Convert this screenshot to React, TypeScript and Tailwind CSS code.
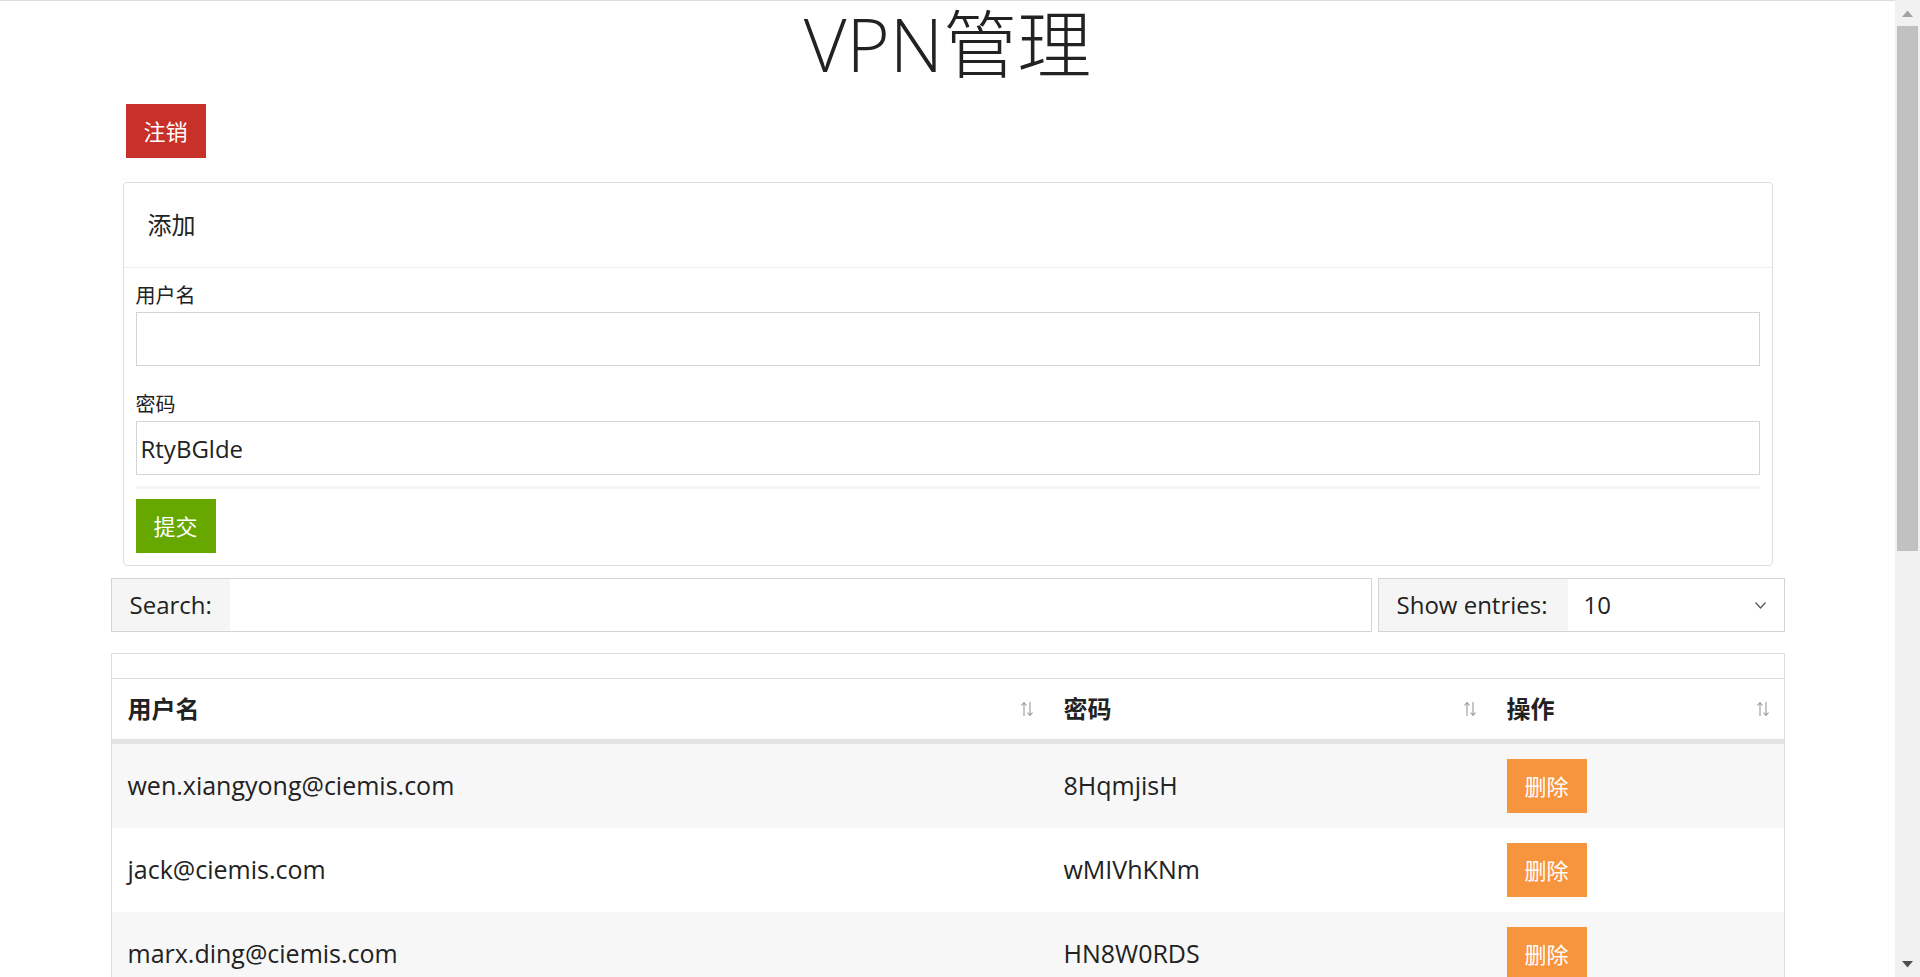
import React from "react";

const users = [
  { name: "wen.xiangyong@ciemis.com", pass: "8HqmjisH" },
  { name: "jack@ciemis.com", pass: "wMIVhKNm" },
  { name: "marx.ding@ciemis.com", pass: "HN8W0RDS" },
  { name: "li.wei@ciemis.com", pass: "Pq7tRzKa" },
  { name: "zhang.min@ciemis.com", pass: "Xv3LmQwe" },
  { name: "chen.hao@ciemis.com", pass: "Bn5YtUio" },
  { name: "wang.lei@ciemis.com", pass: "Kd9SaZxc" },
  { name: "liu.yang@ciemis.com", pass: "Hj2GfDsa" },
  { name: "zhao.qiang@ciemis.com", pass: "Mn4VbCxz" },
  { name: "sun.fang@ciemis.com", pass: "Rt6EwQas" },
];

function SortIcon() {
  return (
    <svg width="14" height="16" viewBox="0 0 14 16" fill="none" stroke="#9a9a9a" strokeWidth="1.1">
      <path d="M4 15V1.5M1.5 4.5L4 1.5L6.5 4.5" />
      <path d="M10 1V14.5M7.5 11.5L10 14.5L12.5 11.5" />
    </svg>
  );
}

function Scrollbar() {
  return (
    <div className="w-[25px] shrink-0 h-full bg-[#f1f1f1] flex flex-col">
      <div className="h-[26px] flex items-center justify-center">
        <svg width="11" height="7" viewBox="0 0 11 7">
          <path d="M0 7L5.5 0.5L11 7Z" fill="#a3a3a3" />
        </svg>
      </div>
      <div className="mx-[2px] h-[525px] bg-[#c1c1c1]" />
      <div className="flex-1" />
      <div className="h-[26px] flex items-center justify-center">
        <svg width="11" height="7" viewBox="0 0 11 7">
          <path d="M0 0L5.5 6.5L11 0Z" fill="#505050" />
        </svg>
      </div>
    </div>
  );
}

const cols = "grid grid-cols-[936px_443px_1fr]";

export default function App() {
  return (
    <div className="flex h-screen overflow-hidden bg-white text-[#222] font-['Open_Sans','Noto_Sans_CJK_SC',sans-serif]">
      <div className="flex-1 min-w-0 h-full overflow-hidden border-t border-[#dddddd]">
        <h1 className="mt-[5px] h-[76px] text-center text-[74px] leading-[76px] font-light text-[#222]">VPN管理</h1>

        <div className="w-[1674px] mx-auto">
          <button className="mt-[22px] ml-[15px] w-[80px] h-[54px] bg-[#c8312a] text-white text-[22px]">注销</button>

          {/* add form */}
          <div className="mt-[24px] mx-[12px] border border-[#dddddd] rounded-[4px]">
            <div className="h-[85px] flex items-center pl-[24px] text-[24px] border-b border-[#eeeeee]">添加</div>
            <div className="px-[12px] pt-[14px] pb-[12px]">
              <div className="h-[28px] leading-[28px] text-[20px] mb-[2px]">用户名</div>
              <input className="block w-full h-[54px] border border-[#d4d4d4] px-[4px] text-[24px] outline-none" />
              <div className="h-[28px] leading-[28px] text-[20px] mt-[25px] mb-[2px]">密码</div>
              <input
                className="block w-full h-[54px] border border-[#d4d4d4] px-[4px] text-[24px] outline-none"
                defaultValue="RtyBGlde"
              />
              <div className="mt-[11px] h-[3px] bg-[#f5f5f5]" />
              <button className="mt-[10px] w-[80px] h-[54px] bg-[#66a800] text-white text-[22px]">提交</button>
            </div>
          </div>

          {/* search + entries */}
          <div className="mt-[12px] flex gap-[6px] h-[54px]">
            <div className="flex-1 flex border border-[#d4d4d4]">
              <div className="w-[118px] bg-[#f5f5f5] flex items-center pl-[18px] text-[24px]">Search:</div>
              <input className="flex-1 px-[12px] text-[24px] outline-none" />
            </div>
            <div className="w-[407px] flex border border-[#d4d4d4]">
              <div className="w-[189px] bg-[#f5f5f5] flex items-center pl-[18px] text-[24px]">Show entries:</div>
              <div className="flex-1 flex items-center justify-between pl-[16px] pr-[18px] text-[24px]">
                <span>10</span>
                <svg width="11" height="7" viewBox="0 0 11 7" fill="none" stroke="#555" strokeWidth="1.2">
                  <path d="M0.5 0.5L5.5 6L10.5 0.5" />
                </svg>
              </div>
            </div>
          </div>

          {/* table */}
          <div className="mt-[21px] border-t border-x border-[#dddddd]">
            <div className="h-[24px]" />
            <div className={`${cols} h-[66px] border-t border-[#dddddd] border-b-[5px] border-b-[#e4e4e4] text-[24px] font-bold`}>
              <div className="flex items-center justify-between pl-[16px] pr-[14px]">
                <span>用户名</span>
                <SortIcon />
              </div>
              <div className="flex items-center justify-between pl-[16px] pr-[14px]">
                <span>密码</span>
                <SortIcon />
              </div>
              <div className="flex items-center justify-between pl-[16px] pr-[14px]">
                <span>操作</span>
                <SortIcon />
              </div>
            </div>
            {users.map((u, i) => (
              <div key={u.name} className={`${cols} h-[84px] text-[25px] ${i % 2 === 0 ? "bg-[#f7f7f7]" : "bg-white"}`}>
                <div className="flex items-center pl-[16px]">{u.name}</div>
                <div className="flex items-center pl-[16px]">{u.pass}</div>
                <div className="flex items-center pl-[16px]">
                  <button className="w-[80px] h-[54px] bg-[#f7953f] text-white text-[22px]">删除</button>
                </div>
              </div>
            ))}
          </div>
          <div className="border-t border-[#dddddd] flex items-center justify-between h-[90px] text-[20px]">
            <span>Showing 1 to 10 of 10 entries</span>
            <div className="flex">
              <span className="px-[14px] py-[8px] border border-[#dddddd] text-[#999]">Previous</span>
              <span className="px-[14px] py-[8px] border border-[#337ab7] bg-[#337ab7] text-white">1</span>
              <span className="px-[14px] py-[8px] border border-[#dddddd] text-[#999]">Next</span>
            </div>
          </div>
        </div>
      </div>
      <Scrollbar />
    </div>
  );
}
